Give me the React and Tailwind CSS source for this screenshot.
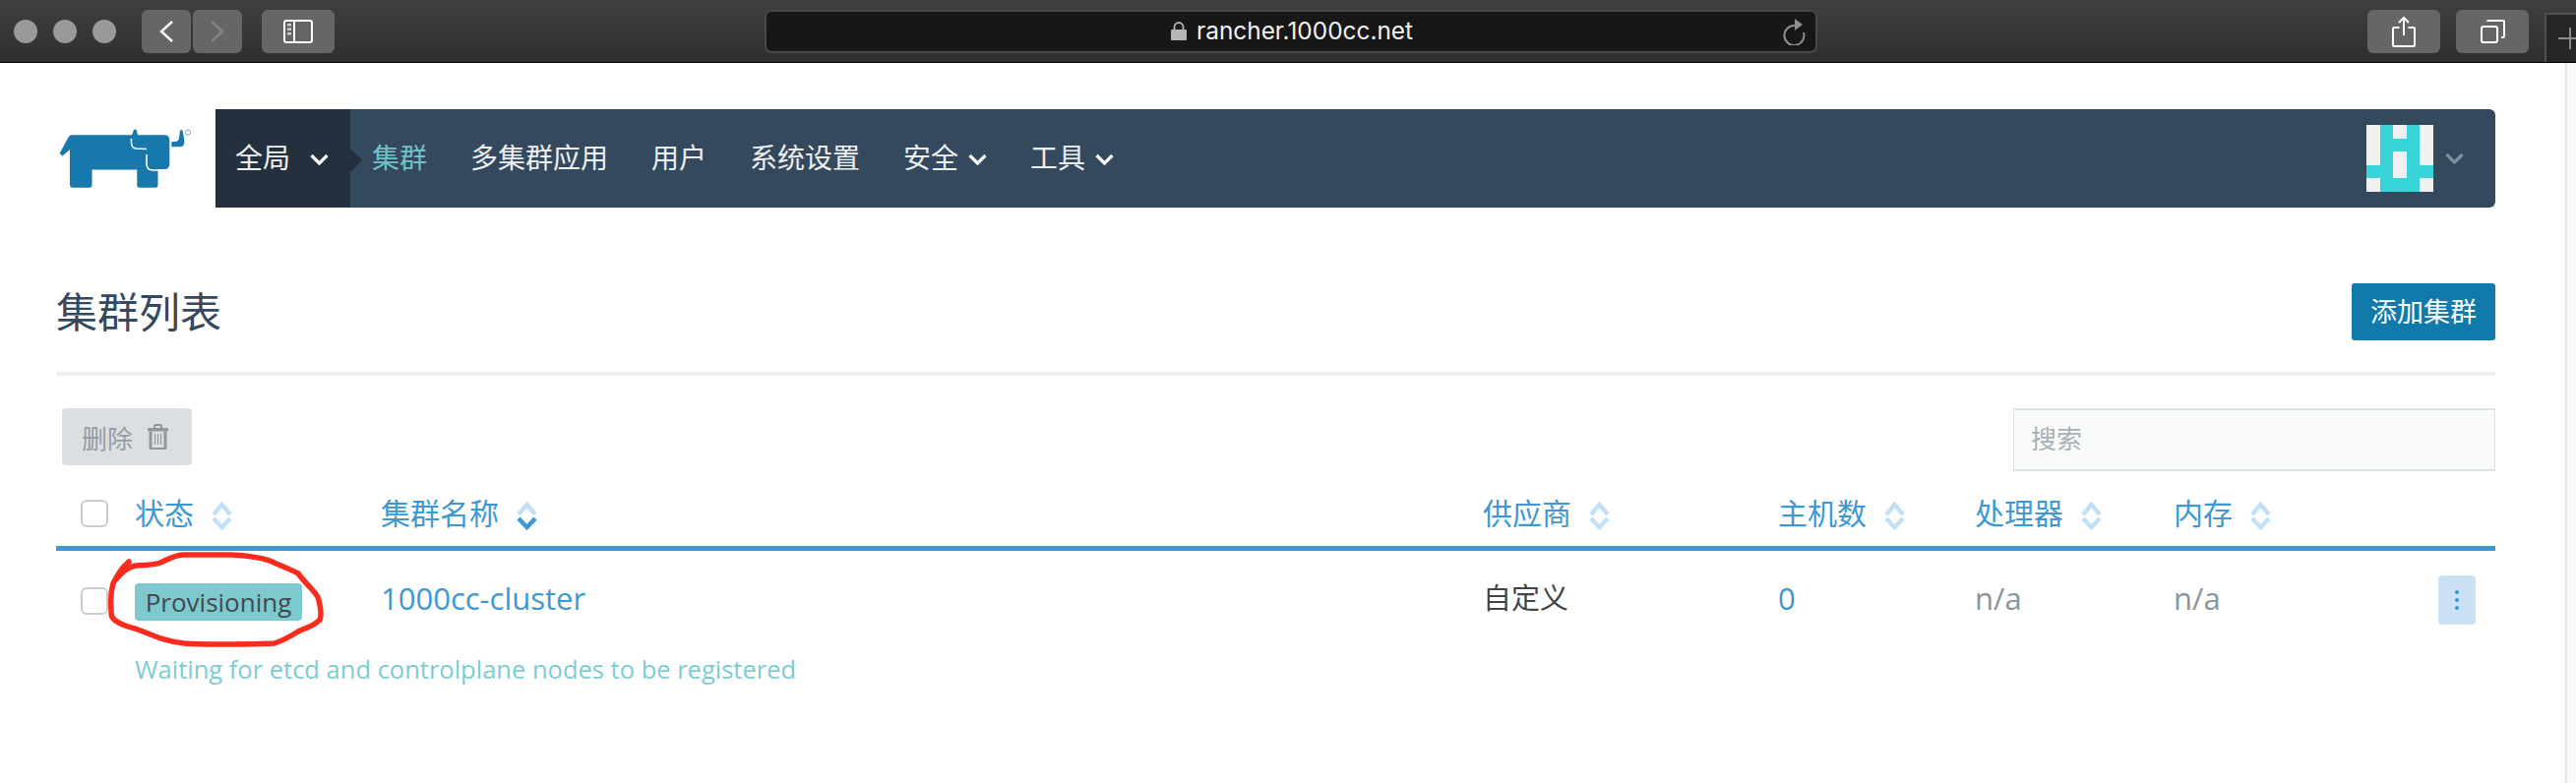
import React from 'react';

const cjk = '"Noto Sans CJK SC", sans-serif';

function Chevron({ className = '', color = '#fff', width = 19, height = 12 }) {
  return (
    <svg width={width} height={height} viewBox="0 0 19 12" fill="none" className={className}>
      <polyline points="1.5,2 9.5,10 17.5,2" stroke={color} strokeWidth="3.2" />
    </svg>
  );
}

function SortIcon({ active = false }) {
  return (
    <svg width="21" height="30" viewBox="0 0 21 30" fill="none" className="shrink-0 mt-[4px]">
      <polyline points="2,14 10.5,4 19,14" stroke="#c3e0f5" strokeWidth="4.5" />
      <polyline points="2,18 10.5,27 19,18" stroke={active ? '#3d98d3' : '#c3e0f5'} strokeWidth="4.5" />
    </svg>
  );
}

function ToolButton({ className = '', children }) {
  return (
    <div className={`h-[44px] rounded-[6px] bg-[#666666] flex items-center justify-center shrink-0 ${className}`}>
      {children}
    </div>
  );
}

function Logo() {
  return (
    <svg width="162" height="100" viewBox="7 -9 162 100" className="shrink-0">
      <path
        d="M10.7 36 L19.5 19.5 Q20.5 17.3 23 17.3 L84 17.3 L86 12 L88.5 11.5 L90 17.3 L117 17.3 Q122.3 17.3 122.3 22 L122.3 47 Q122.3 52 117 52 L110.5 52 L110.5 68 Q110.5 70.7 108 70.7 L92 70.7 Q89.3 70.7 89.3 68 L89.3 52.5 L43.5 52.5 L43.5 68 Q43.5 70.7 41 70.7 L24 70.7 Q21 70.7 21 68 L21 32 L13.5 38.5 Z"
        fill="#1778ab"
      />
      <path d="M83.5 21 Q82.5 30.5 88 31 L99 31.5" stroke="#ffffff" strokeWidth="1.6" fill="none" />
      <path d="M99 37 L99 46 Q99 52.5 104.5 53 L112 53" stroke="#ffffff" strokeWidth="1.6" fill="none" />
      <path d="M133 12.5 L135.3 12 Q137.3 20 137.3 25 Q137 29.3 133 29.3 L124.3 29.3 L124.3 24.3 L128 24 Q131.5 24 132 20 Z" fill="#1778ab" />
      <circle cx="141" cy="14.7" r="2.6" fill="none" stroke="#5fa3cc" strokeWidth="0.9" />
    </svg>
  );
}

function SafariBar() {
  return (
    <div className="h-[64px] flex border-b border-black bg-gradient-to-b from-[#3f3f3f] to-[#2f2f2f] relative">
      <div className="flex items-center gap-[16px] pl-[14px] shrink-0">
        <div className="w-[24px] h-[24px] rounded-full bg-[#999999]" />
        <div className="w-[24px] h-[24px] rounded-full bg-[#999999]" />
        <div className="w-[24px] h-[24px] rounded-full bg-[#999999]" />
      </div>
      <div className="flex items-center gap-[2px] ml-[26px] shrink-0">
        <ToolButton className="w-[50px]">
          <svg width="16" height="24" viewBox="0 0 16 24" fill="none">
            <polyline points="14,2 3,12 14,22" stroke="#ffffff" strokeWidth="2.4" />
          </svg>
        </ToolButton>
        <ToolButton className="w-[50px]">
          <svg width="16" height="24" viewBox="0 0 16 24" fill="none">
            <polyline points="2,2 13,12 2,22" stroke="#858585" strokeWidth="2.4" />
          </svg>
        </ToolButton>
      </div>
      <div className="flex items-center ml-[20px] shrink-0">
        <ToolButton className="w-[74px]">
          <svg width="30" height="24" viewBox="0 0 30 24" fill="none">
            <rect x="1" y="1" width="28" height="22" rx="2" stroke="#ffffff" strokeWidth="2" />
            <line x1="11" y1="1" x2="11" y2="23" stroke="#ffffff" strokeWidth="2" />
            <rect x="4" y="4" width="4" height="2.4" fill="#cfcfcf" />
            <rect x="4" y="8.5" width="4" height="2.4" fill="#cfcfcf" />
            <rect x="4" y="13" width="4" height="2.4" fill="#cfcfcf" />
          </svg>
        </ToolButton>
      </div>
      <div className="flex items-center ml-[437px] shrink-0">
        <div className="w-[1070px] h-[44px] rounded-[7px] bg-[#171717] border-2 border-[#484848] flex items-center relative">
          <div className="ml-[411px] flex items-center gap-[10px]">
            <svg width="16" height="19" viewBox="0 0 16 19" fill="none">
              <path d="M3.5 8 V5.5 a4.5 4.5 0 0 1 9 0 V8" stroke="#b5b5b5" strokeWidth="1.8" />
              <rect x="0" y="8" width="16" height="11" rx="1" fill="#b5b5b5" />
            </svg>
            <span className="text-[24.4px] leading-none text-[#f2f2f2] font-['Inter',sans-serif] whitespace-nowrap">rancher.1000cc.net</span>
          </div>
          <svg width="24" height="28" viewBox="0 0 24 28" fill="none" className="absolute right-[10px] top-[6px]">
            <path d="M13 6 A10 10 0 1 0 22 13" stroke="#8f8f8f" strokeWidth="2" transform="translate(0 2)" />
            <polygon points="13,1 21,7 13,13" fill="#8f8f8f" transform="translate(0 0)" />
          </svg>
        </div>
      </div>
      <div className="flex items-center ml-auto gap-[16px] mr-[48px] shrink-0">
        <ToolButton className="w-[74px]">
          <svg width="24" height="32" viewBox="0 0 24 32" fill="none">
            <path d="M7.5 12 H2 a1 1 0 0 0 -1 1 V30 a1 1 0 0 0 1 1 H22 a1 1 0 0 0 1 -1 V13 a1 1 0 0 0 -1 -1 H16.5" stroke="#ffffff" strokeWidth="2" />
            <line x1="12" y1="2" x2="12" y2="20" stroke="#ffffff" strokeWidth="2" />
            <polyline points="7,7 12,2 17,7" stroke="#ffffff" strokeWidth="2" />
          </svg>
        </ToolButton>
        <ToolButton className="w-[74px]">
          <svg width="25" height="24" viewBox="0 0 25 24" fill="none">
            <rect x="1" y="7" width="16" height="16" rx="2" stroke="#ffffff" strokeWidth="2" />
            <path d="M7 2 a1 1 0 0 1 1 -1 H23 a1 1 0 0 1 1 1 V17 a1 1 0 0 1 -1 1 H21" stroke="#ffffff" strokeWidth="2" />
          </svg>
        </ToolButton>
      </div>
      <div className="absolute right-0 top-[13px] bottom-0 w-[32px] bg-[#262626] border-l-2 border-t-2 border-[#505050] flex items-center">
        <span className="absolute left-[12px] top-[23px] w-[20px] h-[2px] bg-[#8a8a8a]" />
        <span className="absolute left-[23px] top-[13px] w-[2px] h-[22px] bg-[#8a8a8a]" />
      </div>
    </div>
  );
}

function Avatar() {
  // 5x5 identicon, 1 = cyan
  const rows = [
    [0, 1, 0, 1, 0],
    [0, 1, 1, 1, 0],
    [0, 1, 0, 1, 0],
    [1, 1, 0, 1, 1],
    [0, 1, 1, 1, 0],
  ];
  return (
    <div className="w-[68px] h-[68px] grid grid-cols-5 grid-rows-5 shrink-0">
      {rows.flat().map((on, i) => (
        <div key={i} className={on ? 'bg-[#37d5d9]' : 'bg-[#f0f0f0]'} />
      ))}
    </div>
  );
}

function NavItem({ label, active = false, caret = false }) {
  return (
    <div className={`flex items-center gap-[10px] text-[28px] leading-none ${active ? 'text-[#6fc3c8]' : 'text-[#eef1f3]'}`}>
      <span className="pb-[4px]">{label}</span>
      {caret && <Chevron className="mt-[2px]" />}
    </div>
  );
}

function TopNav() {
  return (
    <div className="flex h-[100px]">
      <Logo />
      <div className="flex-1 flex items-center bg-[#35495e] rounded-r-[6px]">
        <div className="w-[137px] h-full bg-[#24303d] flex items-center pl-[20px] gap-[20px] text-[28px] leading-none text-[#eef1f3] relative shrink-0">
          <span className="pb-[4px]">全局</span>
          <Chevron className="mt-[2px]" />
          <span className="absolute left-full top-[40px] border-y-[12px] border-y-transparent border-l-[12px] border-l-[#24303d]" />
        </div>
        <div className="flex items-center gap-[44px] ml-[22px]">
          <NavItem label="集群" active />
          <NavItem label="多集群应用" />
          <NavItem label="用户" />
          <NavItem label="系统设置" />
          <NavItem label="安全" caret />
          <NavItem label="工具" caret />
        </div>
        <div className="ml-auto flex items-center gap-[12px] pr-[32px]">
          <Avatar />
          <Chevron color="#7f8f9c" />
        </div>
      </div>
    </div>
  );
}

function HeaderCell({ label, active = false }) {
  return (
    <div className="flex items-center gap-[18px] text-[30px] leading-none text-[#3d98d3]">
      <span className="pb-[4px]">{label}</span>
      <SortIcon active={active} />
    </div>
  );
}

const columns = 'grid grid-cols-[80px_250px_1120px_300px_200px_202px_200px_1fr] items-center';

function Checkbox({ className = '' }) {
  return <div className={`w-[28px] h-[28px] ml-[25px] rounded-[6px] border-2 border-[#cccccc] bg-white ${className}`} />;
}

function ClusterTable() {
  return (
    <div>
      <div className={`${columns} h-[81px] pt-[10px] border-b-[5px] border-[#3d98d3]`}>
        <Checkbox />
        <HeaderCell label="状态" />
        <HeaderCell label="集群名称" active />
        <HeaderCell label="供应商" />
        <HeaderCell label="主机数" />
        <HeaderCell label="处理器" />
        <HeaderCell label="内存" />
      </div>
      <div className={`${columns} h-[96px]`}>
        <Checkbox className="mt-[5px]" />
        <div className="w-[170px] h-[38px] mt-[8px] rounded-[4px] bg-[#7dc9ce] flex items-center justify-center text-[26px] text-[#3f4a4f] font-['Open_Sans',sans-serif]">
          Provisioning
        </div>
        <div className="text-[31px] text-[#3d98d3] font-['Open_Sans',sans-serif]">1000cc-cluster</div>
        <div className="text-[29px] leading-none pb-[4px] text-[#444444]">自定义</div>
        <div className="text-[31px] text-[#3d98d3] font-['Open_Sans',sans-serif]">0</div>
        <div className="text-[31px] text-[#8a949c] font-['Open_Sans',sans-serif]">n/a</div>
        <div className="text-[31px] text-[#8a949c] font-['Open_Sans',sans-serif]">n/a</div>
        <div className="justify-self-end mr-[20px] mt-[4px] w-[38px] h-[50px] rounded-[4px] bg-[#cbe2f6] flex flex-col items-center justify-center gap-[4px]">
          <span className="w-[4px] h-[4px] rounded-full bg-[#3d98d3]" />
          <span className="w-[4px] h-[4px] rounded-full bg-[#3d98d3]" />
          <span className="w-[4px] h-[4px] rounded-full bg-[#3d98d3]" />
        </div>
      </div>
      <div className="pl-[80px] mt-[6px] text-[25.5px] leading-[36px] text-[#7dccd2] font-['Open_Sans',sans-serif]">
        Waiting for etcd and controlplane nodes to be registered
      </div>
    </div>
  );
}

export default function App() {
  return (
    <div className="w-[2618px] h-[796px] overflow-hidden bg-white relative" style={{ fontFamily: cjk }}>
      <SafariBar />
      <div className="flex h-[732px]">
        <div className="w-[2607px] pl-[57px] pr-[71px] pt-[47px] shrink-0">
          <TopNav />

          {/* title row */}
          <div className="flex items-center justify-between mt-[76px] h-[59px]">
            <h1 className="text-[42px] leading-none pb-[3px] text-[#34495e]">集群列表</h1>
            <div className="w-[146px] h-[58px] mt-[1px] bg-[#1279ab] rounded-[3px] flex items-center justify-center text-white text-[27px] leading-none pb-[3px]">
              添加集群
            </div>
          </div>
          <div className="h-[4px] bg-[#edeff1] mt-[32px]" />

          {/* actions */}
          <div className="flex justify-between mt-[33px]">
            <div className="ml-[6px] w-[132px] h-[58px] rounded-[4px] bg-[#dcdfe2] flex items-center pl-[20px] gap-[15px] text-[26px] text-[#959ca2]">
              <span>删除</span>
              <svg width="21" height="26" viewBox="0 0 21 26" fill="none">
                <path d="M7 4 V2.5 a1.5 1.5 0 0 1 1.5 -1.5 h4 a1.5 1.5 0 0 1 1.5 1.5 V4" stroke="#8d979d" strokeWidth="2" />
                <rect x="0" y="4" width="21" height="3.5" rx="1" fill="#8d979d" />
                <path d="M3 7.5 V23.5 a2 2 0 0 0 2 2 h11 a2 2 0 0 0 2 -2 V7.5" stroke="#8d979d" strokeWidth="3" />
                <path d="M7.5 10 V21 M10.5 10 V21 M13.5 10 V21" stroke="#8d979d" strokeWidth="1.1" />
              </svg>
            </div>
            <div className="w-[490px] h-[64px] bg-[#f9fbfb] border border-[#dde2e5] border-y-2 pl-[17px] flex items-center text-[26px] leading-none text-[#a9b0b5]">
              <span className="pb-[4px]">搜索</span>
            </div>
          </div>

          <ClusterTable />
        </div>
        <div className="flex-1 border-l-2 border-[#e8e8e8] bg-[#fafafa]" />
      </div>

      {/* hand-drawn annotation over the status badge */}
      <svg width="240" height="110" viewBox="100 555 240 110" fill="none" className="absolute left-[100px] top-[555px] pointer-events-none">
        <path
          d="M131 571 C124 577 119 585 117 590 C124 582 130 576 138 575 C148 574 155 575 163 572 C172 568 178 564 187 564 L235 564 C252 565 264 566 274 570 C287 576 296 579 303 583 C312 595 319 600 323 607 C326 617 327 625 325 630 C319 637 310 638 303 642 C295 647 288 651 279 654 C250 655 215 656 187 654 C170 652 160 648 148 643 C137 638 126 637 119 632 C112 628 113 624 113 620 C112 610 113 600 115 593 C119 585 124 578 131 571 Z"
          stroke="#fb2c1e"
          strokeWidth="5.5"
          strokeLinejoin="round"
          strokeLinecap="round"
        />
      </svg>
    </div>
  );
}
